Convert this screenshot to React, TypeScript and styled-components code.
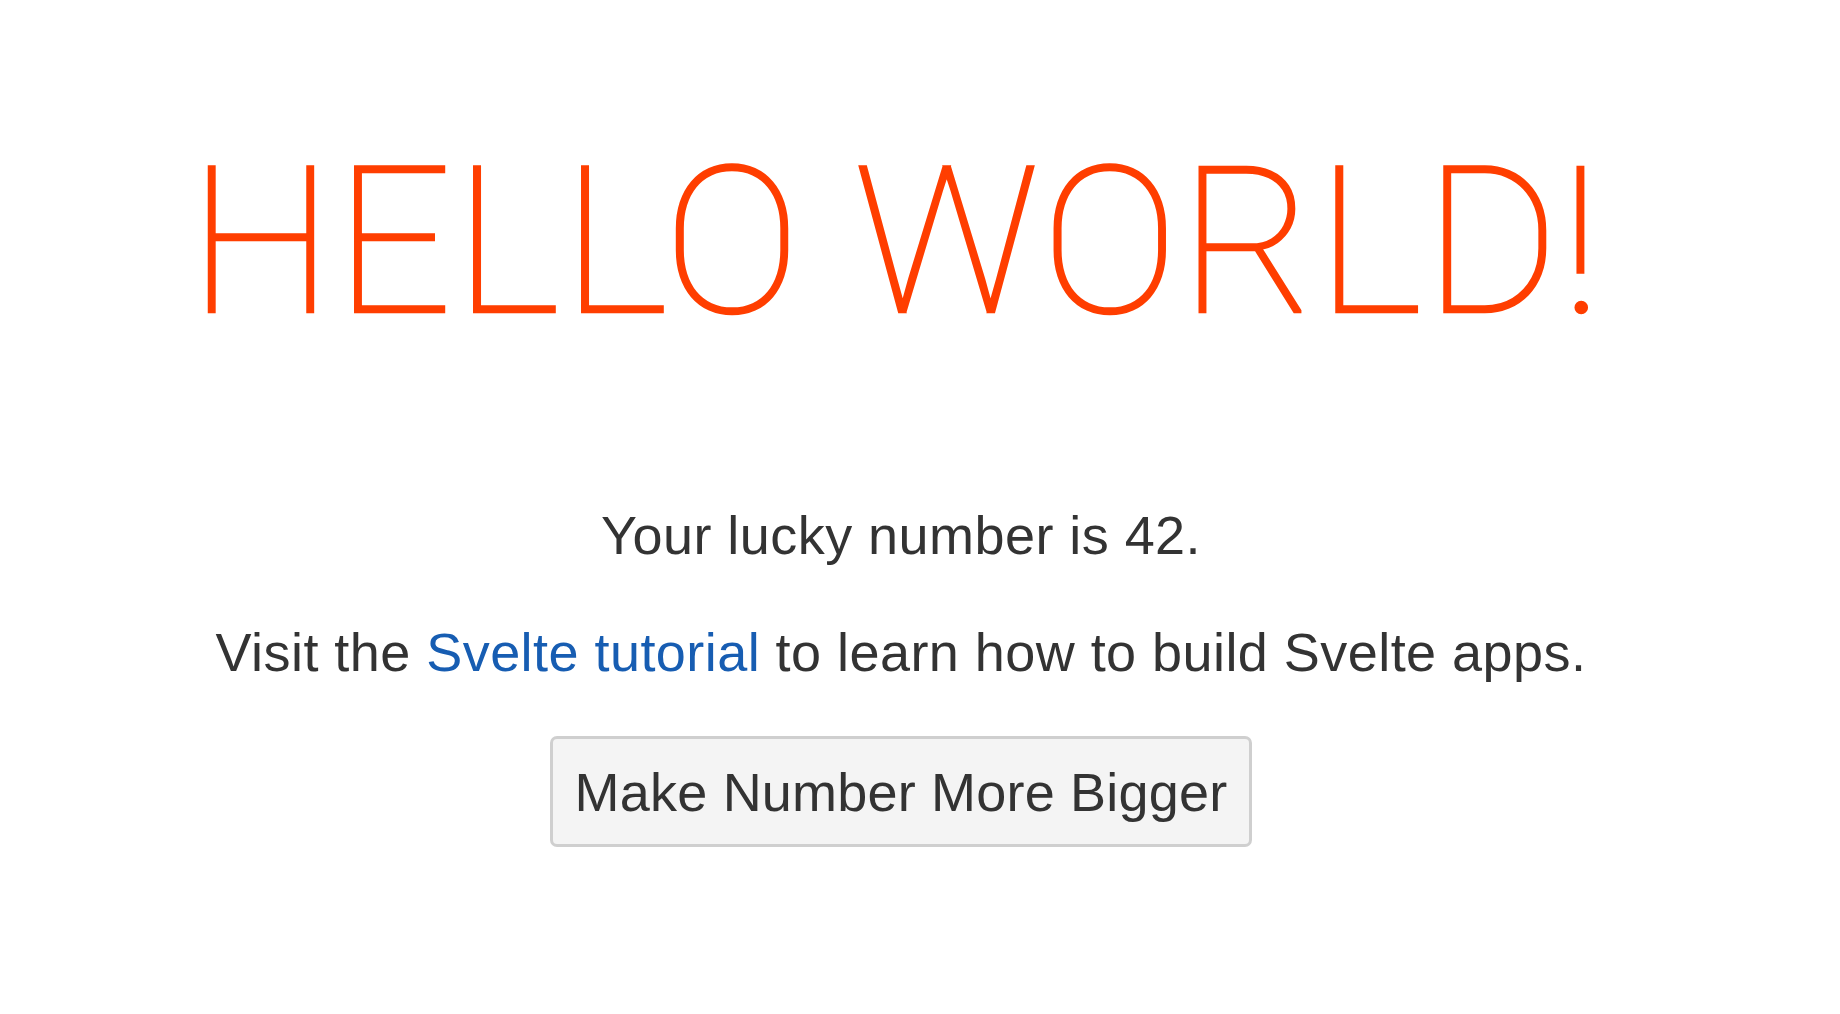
import { useState } from "react";
import styled, { createGlobalStyle } from "styled-components";

const GlobalStyle = createGlobalStyle`
    html, body {
        margin: 0;
        background: #ffffff;
    }
    body {
        color: #333;
        padding: 27px 65px 27px 27px;
        box-sizing: border-box;
        font-family: "Liberation Sans", Arial, sans-serif;
    }
`;

const Main = styled.main`
    text-align: center;
    padding: 54px;
    margin: 0 auto;
`;

const Title = styled.h1`
    color: #ff3e00;
    text-transform: uppercase;
    font-family: Roboto, "Liberation Sans", sans-serif;
    font-size: 205px;
    font-weight: 100;
    line-height: 250px;
    letter-spacing: 2.2px;
    -webkit-text-stroke: 2.5px #ff3e00;
    padding-right: 10px;
    margin: 36px 0 136px;
`;

const Text = styled.p`
    font-size: 54px;
    line-height: 64px;
    letter-spacing: 0.45px;
    margin: 0 0 53px;
`;

const TextLink = styled.a`
    color: #175db2;
    text-decoration: none;
`;

const Button = styled.button`
    font-family: inherit;
    font-size: 54px;
    line-height: 64px;
    letter-spacing: 0.2px;
    color: #333;
    background-color: #f4f4f4;
    border: 3px solid #cfcfcf;
    border-radius: 7px;
    padding: 21px 22px 20px;
    margin: -1px 0 0;
    outline: none;
    cursor: pointer;
`;

export default function App() {
    const [number, setNumber] = useState(42);
    return (
        <>
            <GlobalStyle />
            <Main>
                <Title>Hello world!</Title>
                <Text>Your lucky number is {number}.</Text>
                <Text>
                    Visit the <TextLink href="#">Svelte tutorial</TextLink> to learn how to build Svelte apps.
                </Text>
                <Button onClick={() => setNumber(number + 1)}>Make Number More Bigger</Button>
            </Main>
        </>
    );
}
